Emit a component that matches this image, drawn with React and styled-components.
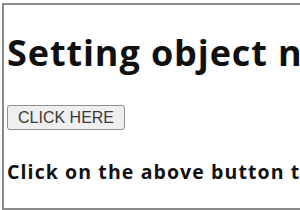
import React from 'react'
import { styled, createGlobalStyle } from 'styled-components'

const GlobalStyle = createGlobalStyle`
  html, body {
    margin: 0;
    padding: 0;
    background: #ffffff;
    overflow: hidden;
  }
`

const Frame = styled.div`
  box-sizing: border-box;
  margin: 3px 0 0 2px;
  width: 298px;
  height: 207px;
  border: 2px solid #8a8a8a;
  border-right: none;
  background: #ffffff;
  display: flex;
  flex-direction: column;
  align-items: flex-start;
  padding: 26px 0 0 3px;
  overflow: hidden;
  white-space: nowrap;
`

const Title = styled.h1`
  margin: 0;
  font-family: 'Open Sans', 'DejaVu Sans', sans-serif;
  font-weight: 700;
  font-size: 36px;
  letter-spacing: 0.9px;
  line-height: 44px;
  color: #111111;
`

const Button = styled.button`
  margin-top: 30px;
  margin-left: 0;
  font-family: 'Liberation Sans', Arial, sans-serif;
  font-size: 16px;
  color: #3a3a3a;
  background: #efefef;
  border: 1px solid #8f8f8f;
  border-radius: 3px;
  padding: 2px 10px;
  height: 25px;
  line-height: 19px;
`

const Note = styled.p`
  margin: 29px 0 0;
  font-family: 'Open Sans', 'DejaVu Sans', sans-serif;
  font-weight: 700;
  font-size: 19.5px;
  letter-spacing: 1.1px;
  line-height: 26px;
  color: #111111;
`

const App = () => {
  return (
    <>
      <GlobalStyle />
      <Frame>
        <Title>Setting object name</Title>
        <Button>CLICK HERE</Button>
        <Note>Click on the above button to set the name</Note>
      </Frame>
    </>
  )
}

export default App
